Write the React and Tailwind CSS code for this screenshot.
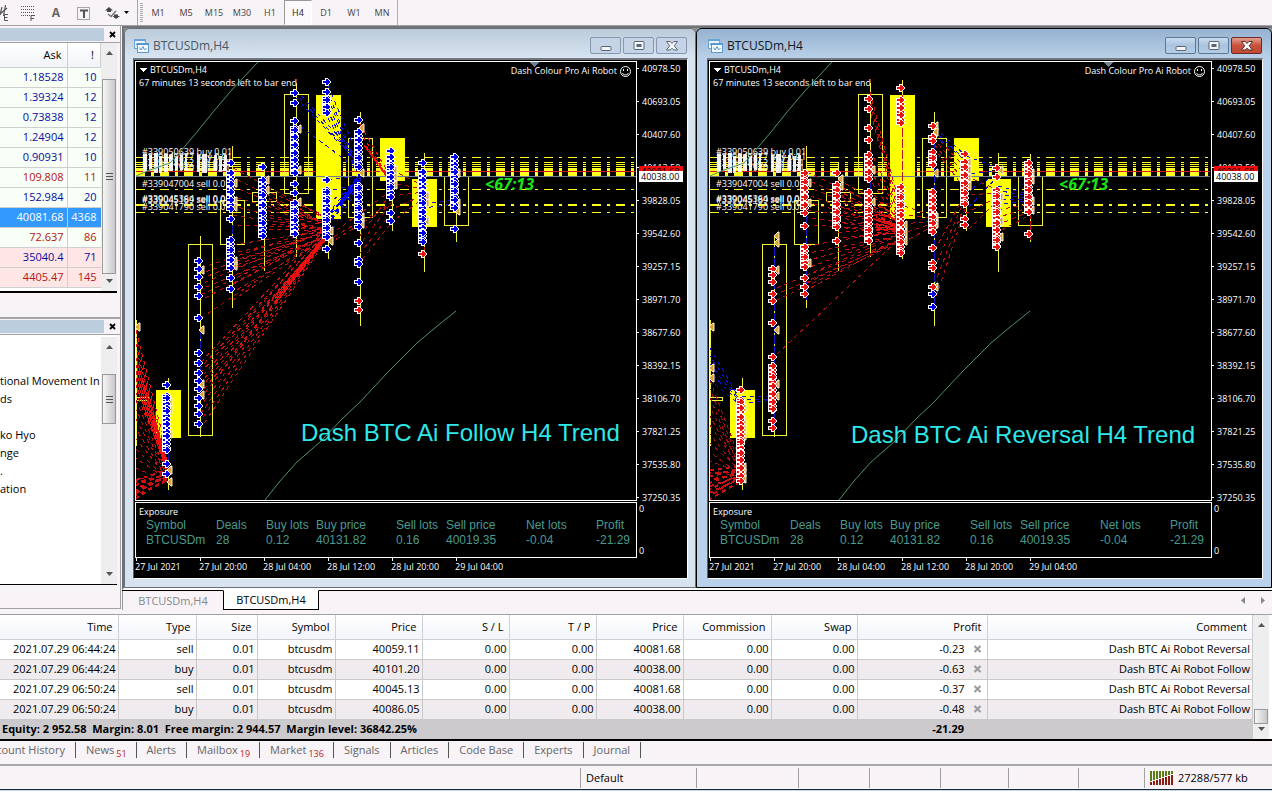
import React from "react";

const UI = "font-['Open_Sans','Noto_Sans',sans-serif]";

/* ---------- shared chart data ---------- */

const PRICES = [
  "40978.50", "40693.05", "40407.60", "40113.50", "39828.05", "39542.60", "39257.15",
  "38971.70", "38677.60", "38392.15", "38106.70", "37821.25", "37535.80", "37250.35",
];
const TIMES = ["27 Jul 2021", "27 Jul 20:00", "28 Jul 04:00", "28 Jul 12:00", "28 Jul 20:00", "29 Jul 04:00"];

// x, open/close top, bottom, wick top, wick bottom, filled
const CANDLES = [
  [136, 397, 400, 320, 446, false],
  [168, 390, 438, 378, 490, true],
  [200, 244, 435, 236, 437, false],
  [232, 200, 244, 146, 308, false],
  [264, 192, 201, 163, 271, false],
  [296, 94, 193, 83, 257, false],
  [328, 95, 219, 80, 259, true],
  [360, 138, 217, 112, 326, false],
  [392, 138, 181, 147, 231, true],
  [424, 179, 227, 153, 272, true],
  [456, 176, 225, 154, 242, false],
];

const FOLLOW = {
  base: "#0000e6",
  alt: "#e81414",
  label: "Dash BTC Ai Follow H4 Trend",
  labelX: 301,
  labelY: 441,
  columns: [
    [166, [385, 398, 411, 424, 436, 450, 464, 474], [[396, 450]]],
    [198, [261, 269, 277, 287, 296, 318, 353, 363, 373, 381, 389, 398, 406, 414, 424], []],
    [230, [163, 173, 184, 192, 200, 209, 219, 240, 250, 260, 268, 278, 289], [[173, 209], [240, 268]]],
    [262, [167, 180, 195, 205, 213, 223, 236], [[180, 232]]],
    [294, [93, 103, 121, 130, 137, 145, 153, 160, 173, 184, 193, 203, 211, 220, 234], [[128, 173], [205, 234]]],
    [326, [82, 92, 100, 107, 113, 180, 192, 201, 210, 220, 228, 237, 249], [[98, 112], [190, 237]]],
    [358, [120, 132, 140, 148, 158, 167, 188, 197, 208, 217, 227, 243, 260, 264, 282], [[132, 165], [186, 225]]],
    [390, [151, 157, 167, 177, 187, 197, 213, 221], [[157, 197]]],
    [422, [163, 172, 180, 193, 203, 212, 219, 233, 242], [[172, 240]]],
    [454, [157, 172, 184, 191, 200, 208, 229], [[157, 207]]],
  ],
  odd: [[358, 301], [358, 310], [422, 254]],
  marks: [
    [138, 327], [170, 402], [170, 410], [170, 434], [170, 470], [170, 482], [202, 270], [202, 330], [202, 384], [202, 395],
    [235, 183], [235, 201], [235, 207], [235, 261], [235, 266], [267, 180], [267, 190], [299, 129], [299, 170], [299, 202],
    [331, 231], [331, 241], [362, 128], [362, 173], [362, 217], [362, 224], [395, 170], [395, 177], [395, 185],
    [427, 196], [427, 203], [427, 221], [458, 173], [458, 203], [458, 211],
  ],
  fans: [
    { c: "#f01010", x1: 136, y1: 330, y2: 400, x2: 167, t1: 452, t2: 478, n: 11 },
    { c: "#c01010", x1: 136, y1: 400, y2: 478, x2: 167, t1: 474, t2: 482, n: 9 },
    { c: "#d01010", x1: 136, y1: 480, y2: 498, x2: 167, t1: 470, t2: 482, n: 8, w: 2 },
    { c: "#f01010", x1: 136, y1: 358, y2: 385, x2: 167, t1: 462, t2: 476, n: 5, solid: true },
    { c: "#c41212", x1: 201, y1: 268, y2: 300, x2: 326, t1: 226, t2: 238, n: 7 },
    { c: "#b01010", x1: 201, y1: 318, y2: 320, x2: 326, t1: 234, t2: 235, n: 1 },
    { c: "#d01212", x1: 201, y1: 362, y2: 398, x2: 328, t1: 226, t2: 238, n: 8 },
    { c: "#c41212", x1: 201, y1: 398, y2: 428, x2: 328, t1: 232, t2: 240, n: 5 },
    { c: "#f01010", x1: 275, y1: 296, y2: 304, x2: 328, t1: 232, t2: 236, n: 4, solid: true },
    { c: "#b81212", x1: 233, y1: 168, y2: 225, x2: 326, t1: 218, t2: 232, n: 7 },
    { c: "#b81212", x1: 233, y1: 245, y2: 300, x2: 326, t1: 230, t2: 240, n: 8 },
    { c: "#c41212", x1: 264, y1: 190, y2: 230, x2: 326, t1: 216, t2: 232, n: 7 },
    { c: "#e81010", x1: 296, y1: 200, y2: 236, x2: 328, t1: 222, t2: 234, n: 7 },
    { c: "#1010c0", x1: 296, y1: 90, y2: 98, x2: 360, t1: 160, t2: 166, n: 3 },
    { c: "#1010c0", x1: 300, y1: 126, y2: 128, x2: 356, t1: 168, t2: 170, n: 1 },
    { c: "#1010d0", x1: 328, y1: 86, y2: 118, x2: 359, t1: 158, t2: 182, n: 6 },
    { c: "#0000f0", x1: 328, y1: 214, y2: 226, x2: 361, t1: 172, t2: 178, n: 6 },
    { c: "#0000f0", x1: 340, y1: 202, y2: 206, x2: 360, t1: 174, t2: 182, n: 4, solid: true },
    { c: "#1010c0", x1: 328, y1: 180, y2: 236, x2: 360, t1: 176, t2: 190, n: 6 },
    { c: "#f01010", x1: 360, y1: 124, y2: 140, x2: 390, t1: 176, t2: 180, n: 3 },
    { c: "#f01010", x1: 366, y1: 146, y2: 148, x2: 386, t1: 174, t2: 176, n: 2, solid: true },
    { c: "#b01010", x1: 330, y1: 235, y2: 243, x2: 392, t1: 190, t2: 208, n: 3 },
    { c: "#b01010", x1: 360, y1: 236, y2: 262, x2: 392, t1: 192, t2: 222, n: 4 },
    { c: "#b01010", x1: 392, y1: 170, y2: 222, x2: 424, t1: 186, t2: 206, n: 5 },
    { c: "#1010c0", x1: 424, y1: 204, y2: 208, x2: 454, t1: 200, t2: 204, n: 2 },
  ],
  stems: [["#1414a0", 200.5, 330, 400], ["#1414a0", 168.5, 440, 470], ["#1414a0", 232.5, 225, 262], ["#1414a0", 360.5, 165, 230], ["#b01010", 424.5, 225, 250]],
};

const REVERSAL = {
  base: "#e81414",
  alt: "#0000e6",
  label: "Dash BTC Ai Reversal H4 Trend",
  labelX: 277,
  labelY: 443,
  columns: [
    [166, [390, 402, 408, 417, 428, 442, 453, 460, 468, 481], [[400, 478]]],
    [198, [269, 275, 282, 294, 301, 323, 357, 366, 377, 386, 394, 402, 409, 421, 428], [[366, 410]]],
    [230, [173, 182, 188, 197, 205, 213, 226, 247, 257, 267, 278, 287, 294], [[176, 210], [247, 267]]],
    [262, [173, 185, 190, 196, 204, 212, 219, 227, 241], [[185, 228]]],
    [294, [99, 109, 128, 140, 155, 163, 172, 179, 192, 200, 210, 220, 230, 241], [[155, 178], [192, 240]]],
    [326, [88, 100, 108, 115, 123, 187, 197, 205, 215, 223, 232, 242, 253], [[100, 122], [187, 252]]],
    [358, [126, 137, 141, 152, 158, 165, 192, 200, 208, 217, 223, 232, 248, 263, 268, 287], [[152, 165], [192, 230]]],
    [390, [154, 162, 167, 175, 183, 193, 204, 219, 225], [[162, 204]]],
    [422, [168, 177, 196, 203, 212, 223, 230, 240, 247], [[190, 247]]],
    [454, [163, 174, 183, 190, 197, 203, 212, 234], [[163, 212]]],
  ],
  odd: [[358, 294], [358, 307]],
  marks: [
    [138, 327], [138, 368], [138, 378], [170, 408], [170, 422], [170, 429], [170, 436], [170, 467], [170, 473], [170, 479],
    [203, 236], [203, 243], [203, 270], [203, 330], [203, 384], [203, 396], [235, 183], [235, 203], [235, 263],
    [267, 179], [267, 186], [299, 170], [299, 202], [331, 225], [331, 233], [331, 241], [362, 126], [362, 132], [362, 173],
    [362, 217], [362, 224], [362, 287], [395, 162], [395, 170], [395, 178], [395, 186], [427, 170], [427, 197], [427, 221],
    [427, 237], [458, 173], [458, 180], [458, 201], [458, 210],
  ],
  fans: [
    { c: "#a01010", x1: 136, y1: 380, y2: 470, x2: 167, t1: 462, t2: 480, n: 11 },
    { c: "#d01010", x1: 136, y1: 470, y2: 499, x2: 167, t1: 466, t2: 484, n: 10, w: 2 },
    { c: "#1010c0", x1: 136, y1: 348, y2: 380, x2: 164, t1: 396, t2: 408, n: 5 },
    { c: "#1010c0", x1: 168, y1: 396, y2: 404, x2: 198, t1: 396, t2: 400, n: 3 },
    { c: "#b81010", x1: 203, y1: 288, y2: 300, x2: 328, t1: 234, t2: 242, n: 3 },
    { c: "#b01010", x1: 203, y1: 354, y2: 356, x2: 326, t1: 238, t2: 240, n: 1 },
    { c: "#c01010", x1: 233, y1: 246, y2: 290, x2: 326, t1: 230, t2: 242, n: 7 },
    { c: "#b81010", x1: 233, y1: 172, y2: 225, x2: 326, t1: 216, t2: 234, n: 8 },
    { c: "#d01010", x1: 264, y1: 180, y2: 238, x2: 326, t1: 212, t2: 236, n: 12 },
    { c: "#c81010", x1: 296, y1: 92, y2: 110, x2: 328, t1: 214, t2: 232, n: 4 },
    { c: "#d01010", x1: 296, y1: 150, y2: 190, x2: 328, t1: 218, t2: 236, n: 5 },
    { c: "#f01010", x1: 296, y1: 200, y2: 236, x2: 328, t1: 218, t2: 236, n: 9 },
    { c: "#f01010", x1: 302, y1: 214, y2: 230, x2: 326, t1: 220, t2: 234, n: 6, solid: true },
    { c: "#b01010", x1: 330, y1: 206, y2: 242, x2: 360, t1: 216, t2: 232, n: 5 },
    { c: "#1010c8", x1: 361, y1: 128, y2: 136, x2: 392, t1: 156, t2: 162, n: 3 },
    { c: "#1010c8", x1: 392, y1: 156, y2: 210, x2: 424, t1: 168, t2: 176, n: 4 },
    { c: "#b01010", x1: 361, y1: 136, y2: 150, x2: 392, t1: 168, t2: 190, n: 4 },
    { c: "#b81010", x1: 361, y1: 250, y2: 300, x2: 392, t1: 192, t2: 206, n: 4 },
    { c: "#b81010", x1: 392, y1: 176, y2: 232, x2: 424, t1: 190, t2: 200, n: 4 },
    { c: "#1010c8", x1: 424, y1: 186, y2: 204, x2: 454, t1: 194, t2: 206, n: 5 },
    { c: "#b81010", x1: 424, y1: 210, y2: 232, x2: 454, t1: 204, t2: 216, n: 4 },
  ],
  stems: [["#1414c0", 200.5, 247, 430], ["#1414c0", 232.5, 205, 300], ["#c01010", 328.5, 95, 256], ["#1414c0", 360.5, 130, 306], ["#1414a0", 296.5, 180, 240], ["#1414c0", 168.5, 430, 470], ["#c01010", 456.5, 210, 240]],
};

function Arrow({ x, y, fill }) {
  return (
    <path
      d={`M${x - 3} ${y - 1}h3v-2h1l3 3-3 3h-1v-2h-3z`}
      fill={fill}
      stroke="#fff"
      strokeWidth="2"
      className="[paint-order:stroke]"
    />
  );
}

function Mark({ x, y }) {
  return <path d={`M${x + 2} ${y - 4}v8h-1l-4-4 4-4z`} fill="#dba13a" stroke="#fff2d0" strokeWidth="1" shapeRendering="auto" />;
}

function Fan({ c, x1, y1, y2, x2, t1, t2, n, w = 1, solid }) {
  return Array.from({ length: n }, (_, i) => {
    const k = n > 1 ? i / (n - 1) : 0;
    const j = n > 1 ? ((i * 5) % n) / (n - 1) : 0;
    return (
      <line
        key={i}
        x1={x1}
        y1={y1 + (y2 - y1) * k}
        x2={x2}
        y2={t1 + (t2 - t1) * (0.6 * k + 0.4 * j)}
        stroke={c}
        strokeWidth={w}
        strokeDasharray={solid ? undefined : "4 4"}
        strokeDashoffset={(i * 3) % 5}
      />
    );
  });
}

function OrderLabels() {
  const rows = [
    [155, "#339050639 buy 0.01"], [160, "#339049877 buy 0.01"], [166, "#339048862 sell 0.01"], [171, "#339047940 sell 0.01"],
    [187, "#339047004 sell 0.01"], [202, "#339045364 sell 0.01"], [203, "#339045189 sell 0.01"], [210, "#339041790 sell 0.01"],
  ];
  return (
    <g fill="#fff">
      {rows.map(([y, t]) => <text key={y} x="142" y={y} className="text-[9px]">{t}</text>)}
      <path d="M143 154h4v18h-4zM149 155h3v15h-3zM154 153h4v20h-4zM159 156h3v17h-3zM164 154h4v18h-4zM169 155h4v16h-4zM175 156h3v14h-3zM180 155h3v15h-3zM185 154h2v17h-2zM197 155h3v17h-3zM202 154h5v19h-5zM214 155h3v16h-3zM219 156h3v16h-3zM224 155h3v16h-3z" opacity="0.9" />
    </g>
  );
}

function Plot({ data }) {
  const dash = "9 6 3 6";
  return (
    <svg width="500" height="438" viewBox="136 62 500 438" shapeRendering="crispEdges" className="block" role="img" aria-label={data.label}>
      <g fill="none" stroke="#ffff20" strokeDasharray={dash}>
        {[157.5, 162.5, 164.5, 166.5].map((y) => <path key={y} d={`M136 ${y}H636`} />)}
        <path d="M136 171H636" strokeWidth="6" />
        <path d="M136 175H636" strokeWidth="2" />
        <path d="M136 189.500H636" />
        <path d="M136 205H636" strokeWidth="2" />
        <path d="M136 212.500H636" />
      </g>
      <path d="M136 171.500H636" stroke="#d01818" />
      {CANDLES.map(([x, t, b, wt, wb, filled]) => (
        <g key={x} stroke="#f4f43c" fill="none">
          <path d={`M${x + 0.5} ${wt}V${wb}`} />
          {filled ? (
            <rect x={x - 12} y={t} width="25" height={b - t} fill="#ffff00" stroke="none" />
          ) : (
            <rect x={x - 11.5} y={t + 0.5} width="24" height={b - t} />
          )}
        </g>
      ))}
      <path d="M136 176.500H636" stroke="#708090" />
      <OrderLabels />
      <g fill="none" stroke="#4c9466" shapeRendering="auto">
        <path d="M136 176L150 170L170 163L180 152L197 132L213 112L230 92L243 78L258 62" />
        <path d="M265 500L280 481L297 462L320 442L343 418L360 402L388 372L417 343L436 327L456 311" />
      </g>
      {data.fans.map((f, i) => <Fan key={i} {...f} />)}
      {data.stems.map(([c, x, a, b]) => <path key={x} d={`M${x} ${a}V${b}`} stroke={c} strokeDasharray="9 2" />)}
      {data.marks.map(([x, y]) => <Mark key={`${x}-${y}`} x={x} y={y} />)}
      {data.columns.map(([x, ys, spans]) => (
        <g key={x}>
          {spans.map(([a, b]) =>
            Array.from({ length: Math.floor((b - a) / 4) + 1 }, (_, i) => (
              <Arrow key={`${a}-${i}`} x={x} y={a + i * 4} fill={data.base} />
            ))
          )}
          {ys.map((y) => <Arrow key={y} x={x} y={y} fill={data.base} />)}
        </g>
      ))}
      {data.odd.map(([x, y]) => <Arrow key={`${x}-${y}`} x={x} y={y} fill={data.alt} />)}
      <path d="M529 62h10l-5 5z" fill="#708090" />
      <path d="M139 68h8l-4 4z" fill="#fff" />
      <g fill="#fff" className="text-[9px]">
        <text x="150" y="73">BTCUSDm,H4</text>
        <text x="139" y="86">67 minutes 13 seconds left to bar end</text>
        <text x="617" y="74" textAnchor="end">Dash Colour Pro Ai Robot</text>
      </g>
      <g stroke="#fff" fill="none" shapeRendering="auto">
        <circle cx="625.500" cy="71.500" r="5" />
        <path d="M622.500 73c1 2.500 5 2.500 6 0" />
        <path d="M623.500 69v2M627.500 69v2" />
      </g>
      <text x="485" y="190" fill="#18e818" className="text-[16px] font-bold italic">&lt;67:13</text>
      <text x={data.labelX} y={data.labelY} fill="#2ee8ea" className="font-['Liberation_Sans',Arial,sans-serif] text-[24px]">{data.label}</text>
    </svg>
  );
}

function Exposure() {
  const cols = [
    ["Symbol", "BTCUSDm", "w-[70px]"], ["Deals", "28", "w-[50px]"], ["Buy lots", "0.12", "w-[50px]"], ["Buy price", "40131.82", "w-[80px]"],
    ["Sell lots", "0.16", "w-[50px]"], ["Sell price", "40019.35", "w-[80px]"], ["Net lots", "-0.04", "w-[70px]"], ["Profit", "-21.29", ""],
  ];
  return (
    <div className="h-14 flex-1 overflow-hidden border border-white pl-[3px] pt-[3px]">
      <div className="text-[9px] leading-3 text-white">Exposure</div>
      <table className="ml-[7px] w-[484px] table-fixed border-collapse font-['Liberation_Sans',Arial,sans-serif] text-[12px] leading-[15px] text-[#489a90]">
        <thead>
          <tr>{cols.map(([h, , w]) => <th key={h} className={`${w} whitespace-nowrap p-0 text-left font-normal`}>{h}</th>)}</tr>
        </thead>
        <tbody>
          <tr>{cols.map(([h, v]) => <td key={h} className="whitespace-nowrap p-0">{v}</td>)}</tr>
        </tbody>
      </table>
    </div>
  );
}

function WindowIcon() {
  return (
    <svg width="15" height="14" viewBox="0 0 15 14" aria-hidden="true">
      <rect x="0.500" y="0.500" width="11" height="9" fill="#e8f2fb" stroke="#6aa4d6" />
      <rect x="0" y="0" width="12" height="2" fill="#6aa4d6" />
      <path d="M2 6l1.500-2 2 2 1.500-2" fill="none" stroke="#4a8cc8" />
      <rect x="3.500" y="4.500" width="11" height="9" fill="#f4f9fe" stroke="#5a98d0" />
      <path d="M3.500 5.500h11" stroke="#5a98d0" />
      <path d="M5.500 8.500l1.500 2.500 2-3.500 1.500 3.500 2-2" fill="none" stroke="#5a98d0" />
    </svg>
  );
}

function CaptionButton({ kind, active }) {
  const red = kind === "close" && active;
  const skin = red
    ? "border-[#6b2a26] bg-linear-to-b from-[#e0a090] via-[#c8503c] to-[#c04a34]"
    : active
      ? "border-[#5f7793] bg-linear-to-b from-[#c8dcf0] via-[#a9c3df] to-[#b4cce6]"
      : "border-[#8797ad] bg-[#c4d4e6]";
  const stroke = red ? "#5a3030" : "#5a6478";
  return (
    <button type="button" aria-label={kind} className={`flex h-[17px] w-[31px] items-center justify-center rounded-[2px] border ${skin}`}>
      <svg width="14" height="12" viewBox="0 0 14 12" fill="#f4f6f8" stroke={stroke} aria-hidden="true">
        {kind === "minimize" && <rect x="2" y="6.500" width="10" height="4" rx="1" />}
        {kind === "maximize" && (
          <>
            <rect x="2" y="1.500" width="10" height="8" rx="1" />
            <rect x="5" y="4.500" width="4" height="2" fill={stroke} />
          </>
        )}
        {kind === "close" && <path d="M1.500 1.500h3.700l1.800 2 1.800-2h3.700L9.300 5.800l3.200 4.200H8.800L7 8.200 5.200 10H1.500l3.200-4.200z" />}
      </svg>
    </button>
  );
}

function ChartWindow({ data, active }) {
  const frame = active
    ? "border-black bg-[#b9d1ea] px-[10px] pr-[8px]"
    : "border-[#6b7078] bg-[#d7e4f0] pl-[8px] pr-[7px]";
  const title = active
    ? "from-[#96b2d0] to-[#b9d0e8] text-[#10181f] -ml-[10px] -mr-[8px] pl-[11px] pr-[9px]"
    : "from-[#bccbd9] to-[#d7e4f2] text-[#4a5864] -ml-[8px] -mr-[7px] pl-[9px] pr-[8px]";
  return (
    <section className={`flex h-[560px] min-w-0 flex-col rounded-t-md border ${frame}`}>
      <header className={`flex h-[29px] shrink-0 items-center rounded-t-md bg-linear-to-b pt-1 ${title}`}>
        <WindowIcon />
        <h2 className="ml-1 flex-1 text-[12px] leading-4">BTCUSDm,H4</h2>
        <div className="flex gap-[2px]">
          <CaptionButton kind="minimize" active={active} />
          <CaptionButton kind="maximize" active={active} />
          <CaptionButton kind="close" active={active} />
        </div>
      </header>
      <div className="flex min-w-0 flex-col gap-px overflow-hidden border border-t-2 border-b-white border-l-[#5a5f66] border-r-white border-t-[#70777f] bg-black pl-px pt-px">
        <div className="flex">
          <div className="h-[440px] flex-1 overflow-hidden border border-white">
            <Plot data={data} />
          </div>
          <div className="relative h-[440px] w-[50px] shrink-0">
            <ol>
              {PRICES.map((p) => (
                <li key={p} className="flex h-[33px] items-start text-[9px] leading-4 text-white">
                  <span className="mt-[7px] h-px w-[2px] bg-white" />
                  <span className="ml-[3px]">{p}</span>
                </li>
              ))}
            </ol>
            <div className="absolute left-[2px] top-[105px] h-[11px] w-[44px] overflow-hidden bg-[#f00c0c] pl-[2px] text-[9px] leading-[11px] text-black">40081.68</div>
            <div className="absolute left-[2px] top-[110px] h-[11px] w-[44px] bg-white pl-[2px] text-[9px] leading-[11px] text-black">40038.00</div>
          </div>
        </div>
        <div className="flex">
          <Exposure />
          <div className="flex w-[50px] shrink-0 flex-col justify-between pl-[2px] text-[9px] leading-[14px] text-white">
            <span>0</span>
            <span>0</span>
          </div>
        </div>
        <ol className="-mt-px flex h-5 text-[9px] text-white">
          {TIMES.map((t) => (
            <li key={t} className="flex w-16 shrink-0 flex-col whitespace-nowrap leading-3">
              <span className="ml-px h-[3px] w-px bg-white" />
              <span>{t}</span>
            </li>
          ))}
        </ol>
      </div>
    </section>
  );
}

/* ---------- toolbar ---------- */

function Toolbar() {
  const frames = ["M1", "M5", "M15", "M30", "H1", "H4", "D1", "W1", "MN"];
  return (
    <nav aria-label="Chart tools" className="flex h-[26px] items-stretch border-b border-[#a3a0a3] bg-[#f7f3f7] text-[9px] text-[#444]">
      <div className="flex w-[138px] items-center border-r border-[#a8a6a8]">
        <button type="button" aria-label="Equidistant channel" className="flex w-[14px] justify-start">
          <svg width="10" height="18" viewBox="0 0 10 18" stroke="#555" fill="none">
            <path d="M0 10l7-6M2 3l-2 8M5.500 1l-2 11" strokeWidth="1.200" />
            <path d="M8 10.500H4.500v6H8M4.500 13.500h3" />
          </svg>
        </button>
        <button type="button" aria-label="Fibonacci" className="flex w-7 justify-center">
          <svg width="16" height="18" viewBox="0 0 16 18" stroke="#555" fill="none">
            <path d="M1 2.500h14M1 5.500h14M1 8.500h14M1 11.500h9" strokeDasharray="1 1" />
            <path d="M15 11.500h-4v5.500M11 14.500h3" />
          </svg>
        </button>
        <button type="button" aria-label="Text" className="w-7 text-center text-[12px] font-bold leading-4 text-[#666]">A</button>
        <button type="button" aria-label="Text label" className="flex w-7 justify-center">
          <svg width="14" height="14" viewBox="0 0 14 14" stroke="#555" fill="none">
            <rect x="0.500" y="1.500" width="12" height="12" strokeDasharray="1 1" />
            <path d="M3 4.500h8M7 4v8" strokeWidth="2" />
          </svg>
        </button>
        <button type="button" aria-label="Arrows" className="flex w-[38px] items-center justify-center gap-1">
          <svg width="15" height="14" viewBox="0 0 15 14" fill="#444">
            <path d="M4 1l4 3.500H6V6H2V4.500H0z" />
            <path d="M3 8l3 2.500L11 5" fill="none" stroke="#777" strokeWidth="1.500" />
            <path d="M11 13L7.500 10H9V8.500h4V10h2z" />
          </svg>
          <svg width="5" height="3" viewBox="0 0 5 3"><path d="M0 0h5L2.500 3z" /></svg>
        </button>
      </div>
      <span className="my-[3px] ml-[2px] mr-px w-[3px] bg-[repeating-linear-gradient(#aaa_0_1px,transparent_1px_2px)]" />
      <div className="flex border-r border-[#b0aeb0] pr-px">
        {frames.map((f) => (
          <button key={f} type="button" className={`w-7 pt-px text-center text-[9px] ${f === "H4" ? "border border-b-white border-l-[#999] border-r-white border-t-[#999] bg-[#fbf9fb] text-[#222]" : ""}`}>
            {f}
          </button>
        ))}
      </div>
    </nav>
  );
}

/* ---------- side panels ---------- */

function ScrollBar({ children, className = "" }) {
  return (
    <div className={`flex shrink-0 flex-col items-center bg-[#efeeef] ${className}`}>
      <svg className="my-2 shrink-0" width="7" height="4" viewBox="0 0 7 4"><path d="M3.500 0L7 4H0z" fill="#555" /></svg>
      {children}
      <svg className="mb-2 mt-auto shrink-0" width="7" height="4" viewBox="0 0 7 4"><path d="M0 0h7L3.500 4z" fill="#555" /></svg>
    </div>
  );
}

function Thumb({ className }) {
  return (
    <div className={`flex flex-col items-center justify-center gap-px border border-[#9a9a9a] bg-linear-to-r from-[#f6f6f6] to-[#c8c8cc] ${className}`}>
      <span className="h-px w-[7px] bg-[#555]" />
      <span className="mt-px h-px w-[7px] bg-[#555]" />
      <span className="mt-px h-px w-[7px] bg-[#555]" />
    </div>
  );
}

function PanelTitle() {
  return (
    <div className="flex h-4 items-center border-b border-[#a0a0a0] pb-px">
      <div className="h-[13px] flex-1 bg-[#bccddd]" />
      <button type="button" aria-label="Close panel" className="flex w-4 justify-center">
        <svg width="7" height="7" viewBox="0 0 7 7"><path d="M1 1l5 5M6 1L1 6" stroke="#000" strokeWidth="1.800" /></svg>
      </button>
    </div>
  );
}

const QUOTES = [
  ["1.18528", "10", "up"], ["1.39324", "12", "up"], ["0.73838", "12", "up"], ["1.24904", "12", "up"], ["0.90931", "10", "up"],
  ["109.808", "11", "down"], ["152.984", "20", "up"], ["40081.68", "4368", "sel"], ["72.637", "86", "down"],
  ["35040.4", "71", "pinkup"], ["4405.47", "145", "pinkdown"],
];
const TONES = {
  up: "bg-[#f7fff7] text-[#0a0aa0]",
  down: "bg-[#f7fff7] text-[#b81414]",
  sel: "bg-[#3399ff] text-white",
  pinkup: "bg-[#ffe6e6] text-[#0a0aa0]",
  pinkdown: "bg-[#ffe6e6] text-[#b81414]",
};

function MarketWatch() {
  return (
    <section className="pt-px">
      <PanelTitle />
      <div className="mr-[3px] flex h-[250px] items-stretch border-b-2 border-black bg-white">
        <div className="w-[101px]">
          <table className="w-full table-fixed border-collapse text-[11px] leading-4">
            <thead>
              <tr className="h-6 bg-linear-to-b from-white to-[#f1f3f7]">
                <th className="w-[67px] border-b border-r border-[#cfcfcf] p-0 pr-[5px] text-right font-normal">Ask</th>
                <th className="border-b border-r border-[#cfcfcf] p-0 pr-[6px] text-right font-normal">!</th>
              </tr>
            </thead>
            <tbody>
              {QUOTES.map(([ask, spread, tone]) => (
                <tr key={ask} className={`h-5 ${TONES[tone]}`}>
                  <td className="border-b border-r border-[#cfcfcf] p-0 pr-[3px] text-right">{ask}</td>
                  <td className="border-b border-[#cfcfcf] p-0 pr-1 text-right">{spread}</td>
                </tr>
              ))}
            </tbody>
          </table>
        </div>
        <ScrollBar className="w-4">
          <Thumb className="mt-4 h-[195px] w-[14px]" />
        </ScrollBar>
      </div>
    </section>
  );
}

function Navigator() {
  const items = ["tional Movement In", "ds", "", "ko Hyo", "nge", ".", "ation"];
  return (
    <section className="mt-6 border-t-2 border-[#a6a4a6]">
      <PanelTitle />
      <div className="mr-[3px] flex h-[250px] border-b border-black bg-white pt-[2px]">
        <ul className="w-[101px] overflow-hidden whitespace-nowrap pt-[35px] text-[11px] leading-[18px] text-black">
          {items.map((t, i) => <li key={i} className="h-[18px]">{t}</li>)}
        </ul>
        <ScrollBar className="w-4">
          <Thumb className="mt-[17px] h-[50px] w-[14px]" />
        </ScrollBar>
      </div>
    </section>
  );
}

/* ---------- terminal ---------- */

const HEAD = [
  ["Time", "w-[118px]"], ["Type", "w-[78px]"], ["Size", "w-[61px]"], ["Symbol", "w-[78px]"], ["Price", "w-[87px]"], ["S / L", "w-[87px]"],
  ["T / P", "w-[87px]"], ["Price", "w-[87px]"], ["Commission", "w-[88px]"], ["Swap", "w-[86px]"], ["Profit", "w-[130px]"], ["Comment", ""],
];
const ORDERS = [
  ["2021.07.29 06:44:24", "sell", "0.01", "btcusdm", "40059.11", "0.00", "0.00", "40081.68", "0.00", "0.00", "-0.23", "Dash BTC Ai Robot Reversal"],
  ["2021.07.29 06:44:24", "buy", "0.01", "btcusdm", "40101.20", "0.00", "0.00", "40038.00", "0.00", "0.00", "-0.63", "Dash BTC Ai Robot Follow"],
  ["2021.07.29 06:50:24", "sell", "0.01", "btcusdm", "40045.13", "0.00", "0.00", "40081.68", "0.00", "0.00", "-0.37", "Dash BTC Ai Robot Reversal"],
  ["2021.07.29 06:50:24", "buy", "0.01", "btcusdm", "40086.05", "0.00", "0.00", "40038.00", "0.00", "0.00", "-0.48", "Dash BTC Ai Robot Follow"],
];
const TABS = [["News", "51"], ["Alerts"], ["Mailbox", "19"], ["Market", "136"], ["Signals"], ["Articles"], ["Code Base"], ["Experts"], ["Journal"]];

function Terminal() {
  return (
    <section>
      <div className="flex border-b-2 border-t border-b-black border-t-[#a0a0a0] bg-white">
        <table className="min-w-0 flex-1 table-fixed border-collapse text-[11px] leading-4 text-black">
          <thead>
            <tr className="h-6 bg-linear-to-b from-white to-[#f3f5fb]">
              {HEAD.map(([h, w], i) => (
                <th key={i} className={`${w} border-b border-r border-[#d0d0d4] p-0 pr-[5px] text-right font-normal`}>{h}</th>
              ))}
            </tr>
          </thead>
          <tbody>
            {ORDERS.map((row, r) => (
              <tr key={r} className={`h-5 ${r % 2 ? "bg-[#efebef]" : "bg-white"}`}>
                {row.map((v, i) => (
                  <td key={i} className="whitespace-nowrap border-b border-r border-[#c9c9c9] p-0 pr-[2px] text-right">
                    {i === 10 ? (
                      <span className="flex items-center justify-end gap-2 pr-[3px]">
                        {v}
                        <button type="button" aria-label="Close order" className="flex">
                          <svg width="9" height="8" viewBox="0 0 9 8"><path d="M1.500 1l6 6M7.500 1l-6 6" stroke="#9a9a9a" strokeWidth="2" /></svg>
                        </button>
                      </span>
                    ) : v}
                  </td>
                ))}
              </tr>
            ))}
          </tbody>
          <tfoot>
            <tr className="h-5 bg-[#cdcacd] font-bold">
              <td colSpan={10} className="whitespace-pre p-0 pl-[2px]">Equity: 2 952.58  Margin: 8.01  Free margin: 2 944.57  Margin level: 36842.25%</td>
              <td className="p-0 pr-[23px] text-right">-21.29</td>
              <td className="p-0" />
            </tr>
          </tfoot>
        </table>
        <ScrollBar className="mr-[3px] w-4">
          <div className="mt-[74px] h-[15px] w-[14px] shrink-0 border border-[#9a9a9a] bg-linear-to-r from-[#f6f6f6] to-[#c8c8cc]" />
        </ScrollBar>
      </div>
      <nav aria-label="Terminal tabs" className="flex h-[25px] items-center overflow-hidden whitespace-nowrap border-b-2 border-[#aaa8aa] pb-[5px] text-[11px] leading-4 text-[#666]">
        <a href="#history" className="flex w-[76px] shrink-0 justify-end overflow-hidden border-r border-[#555] pr-[10px]">Account History</a>
        {TABS.map(([t, n]) => (
          <a key={t} href={`#${t}`} className="flex h-4 shrink-0 border-r border-[#555] px-[10px]">
            {t}
            {n && <span className="-mr-px ml-[2px] mt-1 text-[9px] text-[#c02020]">{n}</span>}
          </a>
        ))}
      </nav>
    </section>
  );
}

function StatusBar() {
  return (
    <footer className="flex h-[23px] items-center pt-px text-[11px] leading-4 text-black">
      <span className="h-5 flex-1" />
      <span className="flex h-5 w-[116px] items-center border-l border-[#a0a0a0] pl-[5px]">Default</span>
      <span className="h-5 w-[102px] border-l border-[#a0a0a0]" />
      <span className="h-5 w-[71px] border-l border-[#a0a0a0]" />
      <span className="h-5 w-[71px] border-l border-[#a0a0a0]" />
      <span className="h-5 w-[68px] border-l border-[#a0a0a0]" />
      <span className="h-5 w-[70px] border-l border-[#a0a0a0]" />
      <span className="h-5 w-[66px] border-l border-[#a0a0a0]" />
      <span className="flex h-5 w-32 items-center gap-1 border-l border-[#a0a0a0] pl-[5px]">
        <svg width="24" height="14" viewBox="0 0 24 14" aria-hidden="true">
          {Array.from({ length: 8 }, (_, i) => (
            <g key={i}>
              <rect x={i * 3} y="0" width="2" height={10 - i} fill="#5a7a14" />
              <rect x={i * 3} y={11 - i} width="2" height={3 + i} fill="#8c1c10" />
            </g>
          ))}
        </svg>
        27288/577 kb
      </span>
    </footer>
  );
}

export default function App() {
  return (
    <div className={`flex min-h-screen w-full flex-col overflow-hidden bg-[#f7f3f7] ${UI}`}>
      <Toolbar />
      <div className="flex">
        <aside className="h-[583px] w-[121px] shrink-0 overflow-hidden border-b border-r border-[#a3a0a3]">
          <MarketWatch />
          <Navigator />
        </aside>
        <main className="ml-px min-w-0 flex-1">
          <div className="grid grid-cols-[572fr_576fr] border-b-2 border-l-2 border-t-2 border-[#707378] border-b-white bg-[#8c8f93]">
            <ChartWindow data={FOLLOW} active={false} />
            <ChartWindow data={REVERSAL} active />
          </div>
          <div className="flex h-5 border-t border-black text-[11px] leading-4">
            <button type="button" className="w-[101px] border-l border-[#999] text-[#888]">BTCUSDm,H4</button>
            <button type="button" className="-mt-px w-24 border border-black border-t-white bg-white text-black">BTCUSDm,H4</button>
            <div className="ml-auto flex items-center gap-4 pr-[7px]">
              <button type="button" aria-label="Scroll tabs left" className="flex"><svg width="4" height="7" viewBox="0 0 4 7"><path d="M4 0v7L0 3.500z" fill="#888" /></svg></button>
              <button type="button" aria-label="Scroll tabs right" className="flex"><svg width="4" height="7" viewBox="0 0 4 7"><path d="M0 0v7l4-3.500z" fill="#888" /></svg></button>
            </div>
          </div>
        </main>
      </div>
      <div className="mt-1 flex flex-col">
        <Terminal />
        <StatusBar />
      </div>
      <div className="mt-auto h-[2px] border-t border-[#1c2a3a] bg-[#c8d8ea]" />
    </div>
  );
}
